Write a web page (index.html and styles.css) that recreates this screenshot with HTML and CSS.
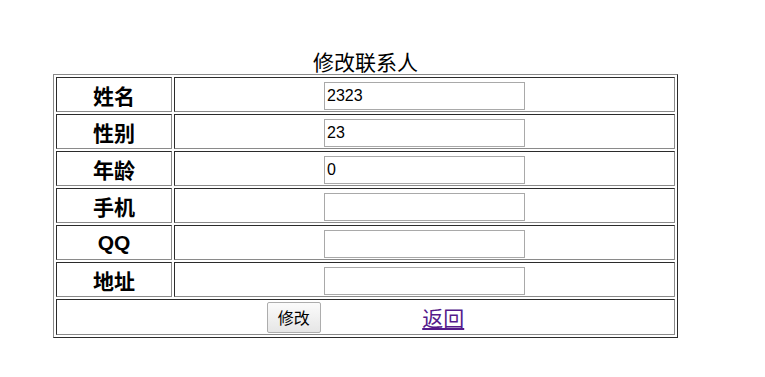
FILE: index.html
```html
<!DOCTYPE html>
<html>
  <head>
    <meta charset="utf-8">
    <title>修改联系人</title>
    <link rel="stylesheet" href="styles.css">
  </head>

  <body>
    <div class="page">
      <form class="edit-form" onsubmit="return false;">
        <table class="contact">
          <caption>修改联系人</caption>
          <tr>
            <th>姓名</th>
            <td><input type="text" name="name" value="2323" /></td>
          </tr>
          <tr>
            <th>性别</th>
            <td><input type="text" name="sex" value="23" /></td>
          </tr>
          <tr>
            <th>年龄</th>
            <td><input type="text" name="age" value="0" /></td>
          </tr>
          <tr>
            <th>手机</th>
            <td><input type="text" name="phone" value="" /></td>
          </tr>
          <tr>
            <th>QQ</th>
            <td><input type="text" name="qq" value="" /></td>
          </tr>
          <tr>
            <th>地址</th>
            <td><input type="text" name="address" value="" /></td>
          </tr>
          <tr class="actions">
            <td colspan="2">
              <button type="submit" class="save-button">修改</button>
              <a href="#" class="back-link">返回</a>
            </td>
          </tr>
        </table>
      </form>
    </div>
  </body>
</html>
```

FILE: styles.css
```css
body {
  margin: 0;
  font-family: "Liberation Sans", "Noto Sans CJK SC", sans-serif;
  background: #fff;
  color: #000;
}

.page {
  padding: 50px 0 0 53px;
}

.contact {
  width: 625px;
  border-collapse: separate;
  border-spacing: 2px;
  border: 1px solid;
  border-color: #8a8a8a #2b2b2b #2b2b2b #8a8a8a;
}

.contact caption {
  font-size: 21px;
  line-height: 22px;
  padding-bottom: 2px;
  font-family: "Noto Sans CJK SC", sans-serif;
}

.contact th,
.contact td {
  box-sizing: border-box;
  height: 35px;
  padding: 1px;
  border: 1px solid;
  border-color: #2b2b2b #8a8a8a #8a8a8a #2b2b2b;
  text-align: center;
  vertical-align: middle;
}

.contact th {
  width: 116px;
  font-size: 21px;
  font-weight: bold;
  font-family: "Liberation Sans", "Noto Sans CJK SC", sans-serif;
}

.contact input {
  display: block;
  box-sizing: border-box;
  width: 201px;
  height: 28px;
  margin: 3px auto 0;
  padding: 1px 2px;
  border: 1px solid #a9a9a9;
  font-size: 16px;
  font-family: "Liberation Sans", sans-serif;
  color: #000;
}

.actions td {
  height: 36px;
}

.save-button {
  box-sizing: border-box;
  width: 54px;
  height: 31px;
  padding: 0;
  vertical-align: middle;
  font-size: 16px;
  font-family: "Noto Sans CJK SC", sans-serif;
  color: #000;
  background: linear-gradient(#fbfbfb, #e6e6e6);
  border: 1px solid #adadad;
  border-radius: 2px;
}

.back-link {
  margin-left: 97px;
  vertical-align: middle;
  font-size: 21px;
  font-family: "Noto Sans CJK SC", sans-serif;
  color: #551a8b;
}
```
